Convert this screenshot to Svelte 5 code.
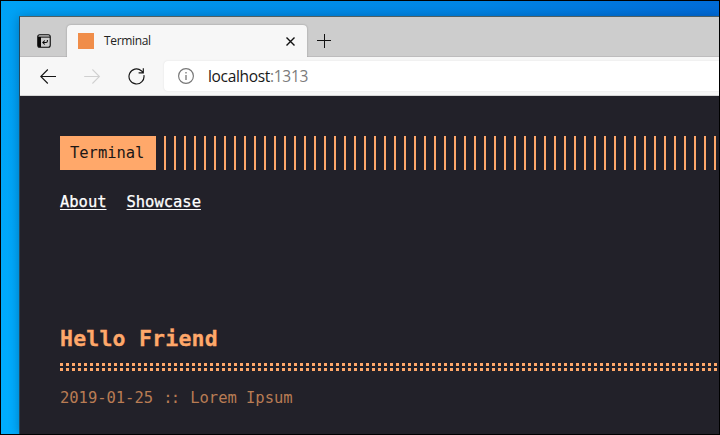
<script>
  const host = 'localhost';
  const port = ':1313';
  const links = ['About', 'Showcase'];
</script>

<div class="desktop">
  <div class="window">
    <div class="tabs">
      <svg class="actions" width="14" height="14" viewBox="0 0 14 14" fill="none" stroke="#080808">
        <rect x=".75" y=".75" width="12.5" height="12.5" rx="2" stroke-width="1.1" />
        <path d="M1 3.1H13" stroke-width="1" />
        <path d="M1 3H4V13H2.5Q1 13 1 11.5Z" fill="#080808" stroke="none" />
        <path d="M10.4 6V7Q10.4 8.5 9 8.5H6M7.8 6.5L5.8 8.5L7.8 10.5" stroke-width="1.05" />
      </svg>
      <div class="tab">
        <span class="favicon"></span>
        <span class="title">Terminal</span>
        <svg class="close" width="9" height="9" viewBox="0 0 9 9" stroke="#111" stroke-width="1.4"><path d="M.5 .5L8.5 8.5M8.5 .5L.5 8.5" /></svg>
      </div>
      <svg class="plus" width="14" height="14" viewBox="0 0 14 14" stroke="#111" stroke-width="1"><path d="M7.5 0V14M0 6.5H14" /></svg>
    </div>

    <div class="toolbar">
      <svg class="back" width="17" height="15" viewBox="0 0 17 15" fill="none" stroke="#151515" stroke-width="1.1"><path d="M16 7.5H.8M7.8 .5L.8 7.5L7.8 14.5" /></svg>
      <svg class="forward" width="17" height="15" viewBox="0 0 17 15" fill="none" stroke="#d0d0d0" stroke-width="1.1"><path d="M.2 7.5H15.4M8.4 .5L15.4 7.5L8.4 14.5" /></svg>
      <svg class="reload" width="18" height="17" viewBox="0 0 18 17" fill="none" stroke="#151515" stroke-width="1.15"><path d="M15.9 7.2A7.5 7.5 0 1 1 13.3 2.7L15 4.5M15.3 .3V4.9H10.6" /></svg>
      <div class="address">
        <svg width="16" height="16" viewBox="0 0 16 16" fill="none" stroke="#777"><circle cx="8" cy="8" r="7.4" stroke-width="1.15" /><path d="M8 7V12M8 4V5.5" stroke-width="1.3" /></svg>
        <span class="url">{host}<span class="port">{port}</span></span>
      </div>
    </div>

    <main>
      <header>
        <div class="logo"><span>Terminal</span></div>
        <div class="stripes"></div>
      </header>
      <nav>
        {#each links as link}<a href="#top">{link}</a>{/each}
      </nav>
      <article>
        <h1>Hello Friend</h1>
        <div class="rule"></div>
        <div class="meta">2019-01-25 <span class="colons">::</span> Lorem Ipsum</div>
      </article>
    </main>
  </div>
</div>

<style>
  .desktop {
    box-sizing: border-box;
    width: 720px;
    height: 435px;
    border: 1px solid #000;
    padding: 15px 0 0 18px;
    overflow: hidden;
    background:
      linear-gradient(180deg, rgba(0, 174, 255, 0) 60px, rgba(0, 174, 255, .9) 400px) 0 0 / 20px 100% no-repeat,
      linear-gradient(90deg, #00a2f5 0, #0092ea 200px, #0084e4 480px, #006bd7 720px);
  }
  .window {
    box-sizing: border-box;
    width: 700px;
    height: 418px;
    border-top: 1px solid #4f6063;
    border-left: 1px solid #26485c;
    box-shadow: 0 1px 10px rgba(0, 20, 50, .32);
    font-family: "Noto Sans", "Open Sans", sans-serif;
  }
  .tabs {
    box-sizing: border-box;
    height: 40px;
    display: flex;
    align-items: flex-start;
    background: #cdcdcd;
    border-bottom: 1px solid #bdbcbd;
    padding: 8px 0 0 17px;
  }
  svg { flex: none; display: block; }
  .actions { margin: 9px 16px 0 0; }
  .tab {
    box-sizing: border-box;
    width: 240px;
    height: 32px;
    display: flex;
    align-items: center;
    flex: none;
    padding: 0 12px 0 11px;
    background: #f7f7f7;
    border-radius: 4px 4px 0 0;
    box-shadow: 0 0 2px rgba(0, 0, 0, .3);
    clip-path: inset(-3px -3px 0 -3px);
  }
  .favicon { width: 16px; height: 16px; background: #f08d49; margin-right: 10px; }
  .title { flex: 1; font-family: "Open Sans", "Noto Sans", sans-serif; font-size: 12px; line-height: 16px; letter-spacing: -.35px; color: #222; }
  .close { margin-top: 1px; }
  .plus { margin: 9px 0 0 10px; }
  .toolbar {
    box-sizing: border-box;
    height: 39px;
    display: flex;
    align-items: center;
    background: #f7f7f7;
    border-bottom: 1px solid #d5d5d5;
    padding-left: 20px;
  }
  .forward { margin-left: 27px; }
  .reload { margin-left: 27px; }
  .address {
    box-sizing: border-box;
    margin-left: 18px;
    height: 30px;
    flex: 1;
    display: flex;
    align-items: center;
    padding-left: 14px;
    background: #fff;
    border-radius: 4px 0 0 4px;
    box-shadow: 0 0 2px rgba(0, 0, 0, .1);
  }
  .url { margin-left: 14px; font-family: "Open Sans", "Noto Sans", sans-serif; font-size: 15.5px; line-height: 20px; color: #181818; letter-spacing: -.32px; white-space: nowrap; }
  .port { color: #7b7b7b; }
  main {
    box-sizing: border-box;
    height: 338px;
    background: #222129;
    padding: 40px 0 0 40px;
    font-family: "DejaVu Sans Mono", monospace;
    font-size: 15.5px;
    letter-spacing: -.03px;
    color: #fff;
    overflow: hidden;
  }
  header { display: flex; height: 34px; }
  .logo { box-sizing: border-box; width: 96px; padding-left: 10px; line-height: 34px; background: #ffa86a; color: #1c1716; white-space: nowrap; }
  .stripes { margin-left: 8px; flex: 1; background: repeating-linear-gradient(90deg, #ffa86a 0 2px, transparent 2px 10px); }
  nav { display: flex; gap: 20px; margin-top: 20px; height: 24px; line-height: 24px; }
  a { color: #fff; text-decoration: underline; text-decoration-thickness: 1px; text-underline-offset: 2px; -webkit-text-stroke: .25px #fff; }
  article { color: #ffa86a; }
  h1 { margin: 109px 0 0; height: 32px; font-size: 21.5px; line-height: 32px; letter-spacing: .21px; -webkit-text-stroke: .3px #ffa86a; }
  .rule {
    margin-top: 8px;
    height: 8px;
    background:
      linear-gradient(#222129, #222129) 0 3px / 100% 2px no-repeat,
      repeating-linear-gradient(90deg, #ffa86a 0 3px, transparent 3px 6px);
  }
  .meta { margin-top: 15px; line-height: 24px; color: #b97c54; }
  .colons { letter-spacing: -1.8px; margin: 0 2.65px 0 .9px; }
</style>
